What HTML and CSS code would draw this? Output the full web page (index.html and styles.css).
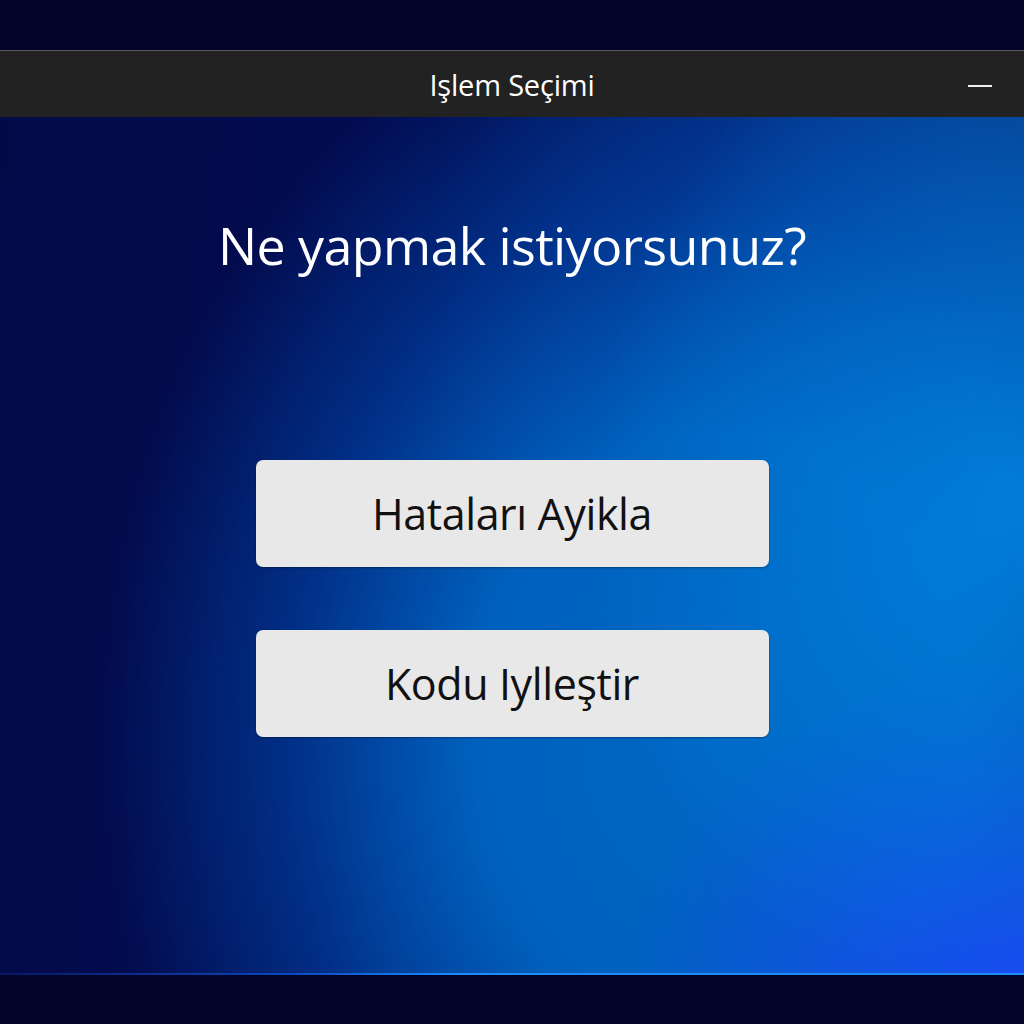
FILE: index.html
```html
<!DOCTYPE html>
<html lang="tr">
<head>
<meta charset="utf-8">
<title>Işlem Seçimi</title>
<link rel="stylesheet" href="styles.css">
</head>
<body>
<div class="screen">
  <div class="top-strip"></div>
  <div class="window">
    <div class="titlebar">
      <span class="title">Işlem Seçimi</span>
      <span class="minimize"></span>
    </div>
    <div class="content">
      <h1 class="question">Ne yapmak istiyorsunuz?</h1>
      <div class="actions">
        <button class="action">Hataları Ayikla</button>
        <button class="action">Kodu Iylleştir</button>
      </div>
    </div>
  </div>
  <div class="bottom-strip"></div>
</div>
</body>
</html>
```
FILE: styles.css
```css
* { box-sizing: border-box; }
html, body { margin: 0; padding: 0; }
body {
  width: 1024px;
  height: 1024px;
  overflow: hidden;
  font-family: "Open Sans", "Noto Sans", sans-serif;
  background: #02032a;
}
.screen {
  display: flex;
  flex-direction: column;
  height: 1024px;
}
.top-strip {
  height: 50px;
  background: #03032b;
}
.window {
  display: flex;
  flex-direction: column;
  height: 925px;
}
.titlebar {
  height: 67px;
  background: #222222;
  border-top: 1px solid #5a5a5a;
  display: flex;
  align-items: center;
  justify-content: center;
  position: relative;
}
.title {
  color: #ffffff;
  font-size: 29px;
  letter-spacing: -0.2px;
}
.minimize {
  position: absolute;
  right: 32px;
  top: 34px;
  width: 24px;
  height: 2px;
  background: #f0f0f0;
}
.content {
  flex: 1;
  display: flex;
  flex-direction: column;
  align-items: center;
  border-bottom: 2px solid;
  border-image: linear-gradient(90deg, rgba(20,80,200,0.2) 0%, rgba(20,110,255,0.6) 28%, #1f8cff 45%, #1f8cff 100%) 1;
  background:
    radial-gradient(ellipse 420px 520px at 1010px 380px, rgba(0,140,230,0.75), rgba(0,140,230,0) 100%),
    radial-gradient(ellipse 420px 360px at 1040px 900px, rgba(30,70,255,0.95), rgba(30,70,255,0) 100%),
    radial-gradient(ellipse 620px 760px at 720px 620px, #0067c4 0%, #0060bd 40%, rgba(0,70,170,0.6) 70%, rgba(0,40,120,0) 100%),
    linear-gradient(100deg, #030a48 0%, #020c52 40%, #052e84 70%, #0a3f8f 100%);
}
.question {
  margin: 93px 0 0 0;
  color: #ffffff;
  font-size: 52px;
  font-weight: 400;
  letter-spacing: -0.6px;
  line-height: 70px;
}
.actions {
  margin-top: 180px;
  display: flex;
  flex-direction: column;
  gap: 63px;
}
.action {
  width: 513px;
  height: 107px;
  border: none;
  border-radius: 7px;
  background: #e8e8e8;
  color: #111111;
  font-family: "Open Sans", "Noto Sans", sans-serif;
  font-size: 43px;
  letter-spacing: -0.4px;
  box-shadow: 0 1px 2px rgba(0,0,0,0.35);
  cursor: pointer;
}
.bottom-strip {
  flex: 1;
  background:
    radial-gradient(ellipse 360px 120px at 1024px 1024px, rgba(0,60,110,0.9), rgba(0,40,90,0) 100%),
    #02032a;
}
```
